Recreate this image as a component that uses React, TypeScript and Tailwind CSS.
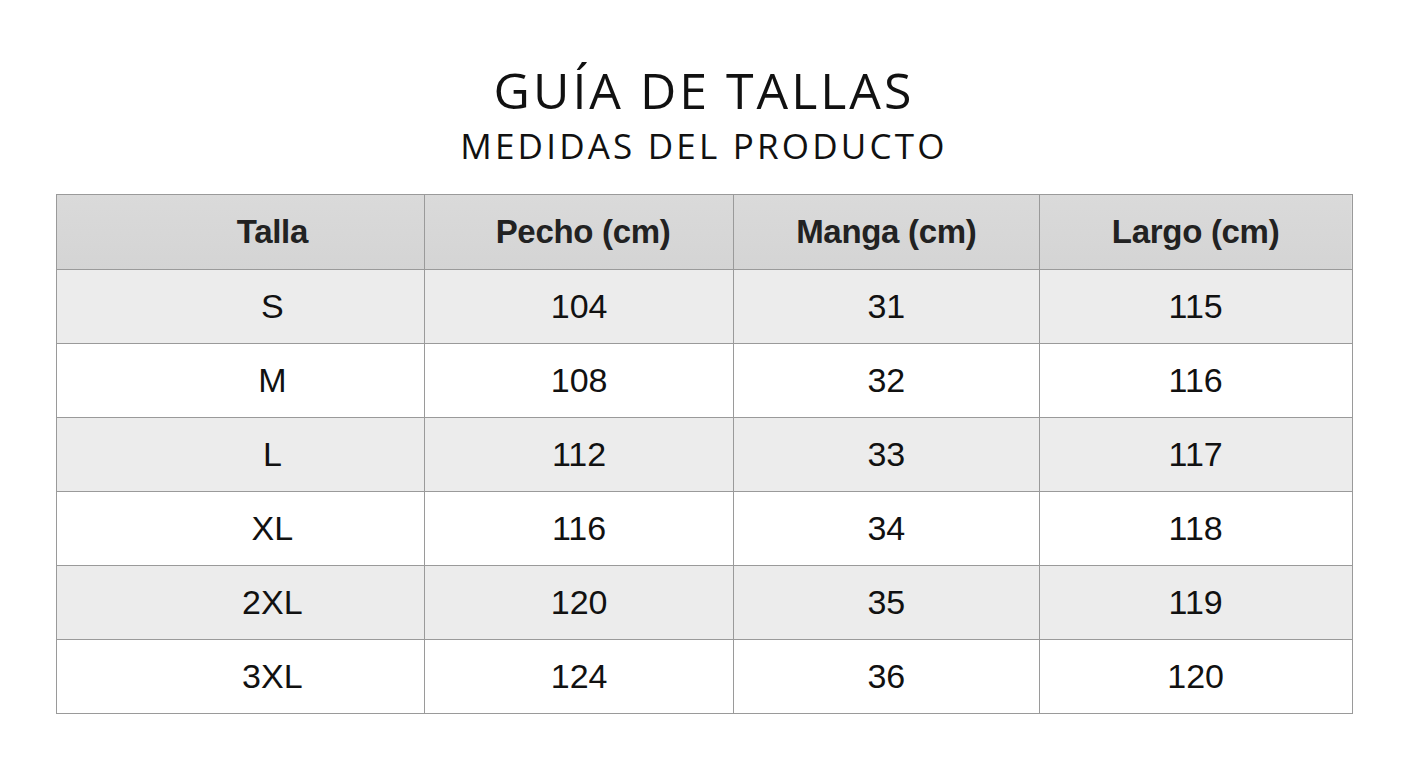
import React from 'react';

const rows = [
  { size: 'S', chest: 104, sleeve: 31, length: 115 },
  { size: 'M', chest: 108, sleeve: 32, length: 116 },
  { size: 'L', chest: 112, sleeve: 33, length: 117 },
  { size: 'XL', chest: 116, sleeve: 34, length: 118 },
  { size: '2XL', chest: 120, sleeve: 35, length: 119 },
  { size: '3XL', chest: 124, sleeve: 36, length: 120 },
];

const cols = ['Talla', 'Pecho (cm)', 'Manga (cm)', 'Largo (cm)'];

export default function App() {
  return (
    <div className="w-[1408px] h-[768px] bg-white flex flex-col items-center overflow-hidden">
      <div className="pt-[62px] flex flex-col items-center text-[#111]" style={{ fontFamily: '"Open Sans", Lato, sans-serif' }}>
        <h1 className="text-[50px] leading-[56px] font-normal tracking-[3px]">GUÍA DE TALLAS</h1>
        <h2 className="text-[35px] leading-[40px] font-normal tracking-[3.2px] mt-[8px]">MEDIDAS DEL PRODUCTO</h2>
      </div>

      <table
        className="mt-[28px] w-[1297px] border-collapse border border-[#9a9a9a] text-[#111]"
        style={{ fontFamily: '"Liberation Sans", Arial, sans-serif' }}
      >
        <colgroup>
          <col className="w-[369px]" />
          <col className="w-[309px]" />
          <col className="w-[306px]" />
          <col className="w-[313px]" />
        </colgroup>
        <thead>
          <tr className="h-[75px] bg-gradient-to-b from-[#dadada] to-[#d4d4d4]">
            {cols.map((c, i) => (
              <th key={c} className={`border border-[#9a9a9a] text-[33px] font-bold text-[#222] tracking-[-0.3px] ${i === 0 ? 'pl-[64px]' : i === 1 ? 'pl-[8px]' : ''}`}>{c}</th>
            ))}
          </tr>
        </thead>
        <tbody>
          {rows.map((r, i) => (
            <tr key={r.size} className={`h-[74px] ${i % 2 === 0 ? 'bg-[#ececec]' : 'bg-white'}`}>
              <td className="border border-[#9a9a9a] text-center text-[34px] pl-[64px]">{r.size}</td>
              <td className="border border-[#9a9a9a] text-center text-[34px]">{r.chest}</td>
              <td className="border border-[#9a9a9a] text-center text-[34px]">{r.sleeve}</td>
              <td className="border border-[#9a9a9a] text-center text-[34px]">{r.length}</td>
            </tr>
          ))}
        </tbody>
      </table>
    </div>
  );
}
